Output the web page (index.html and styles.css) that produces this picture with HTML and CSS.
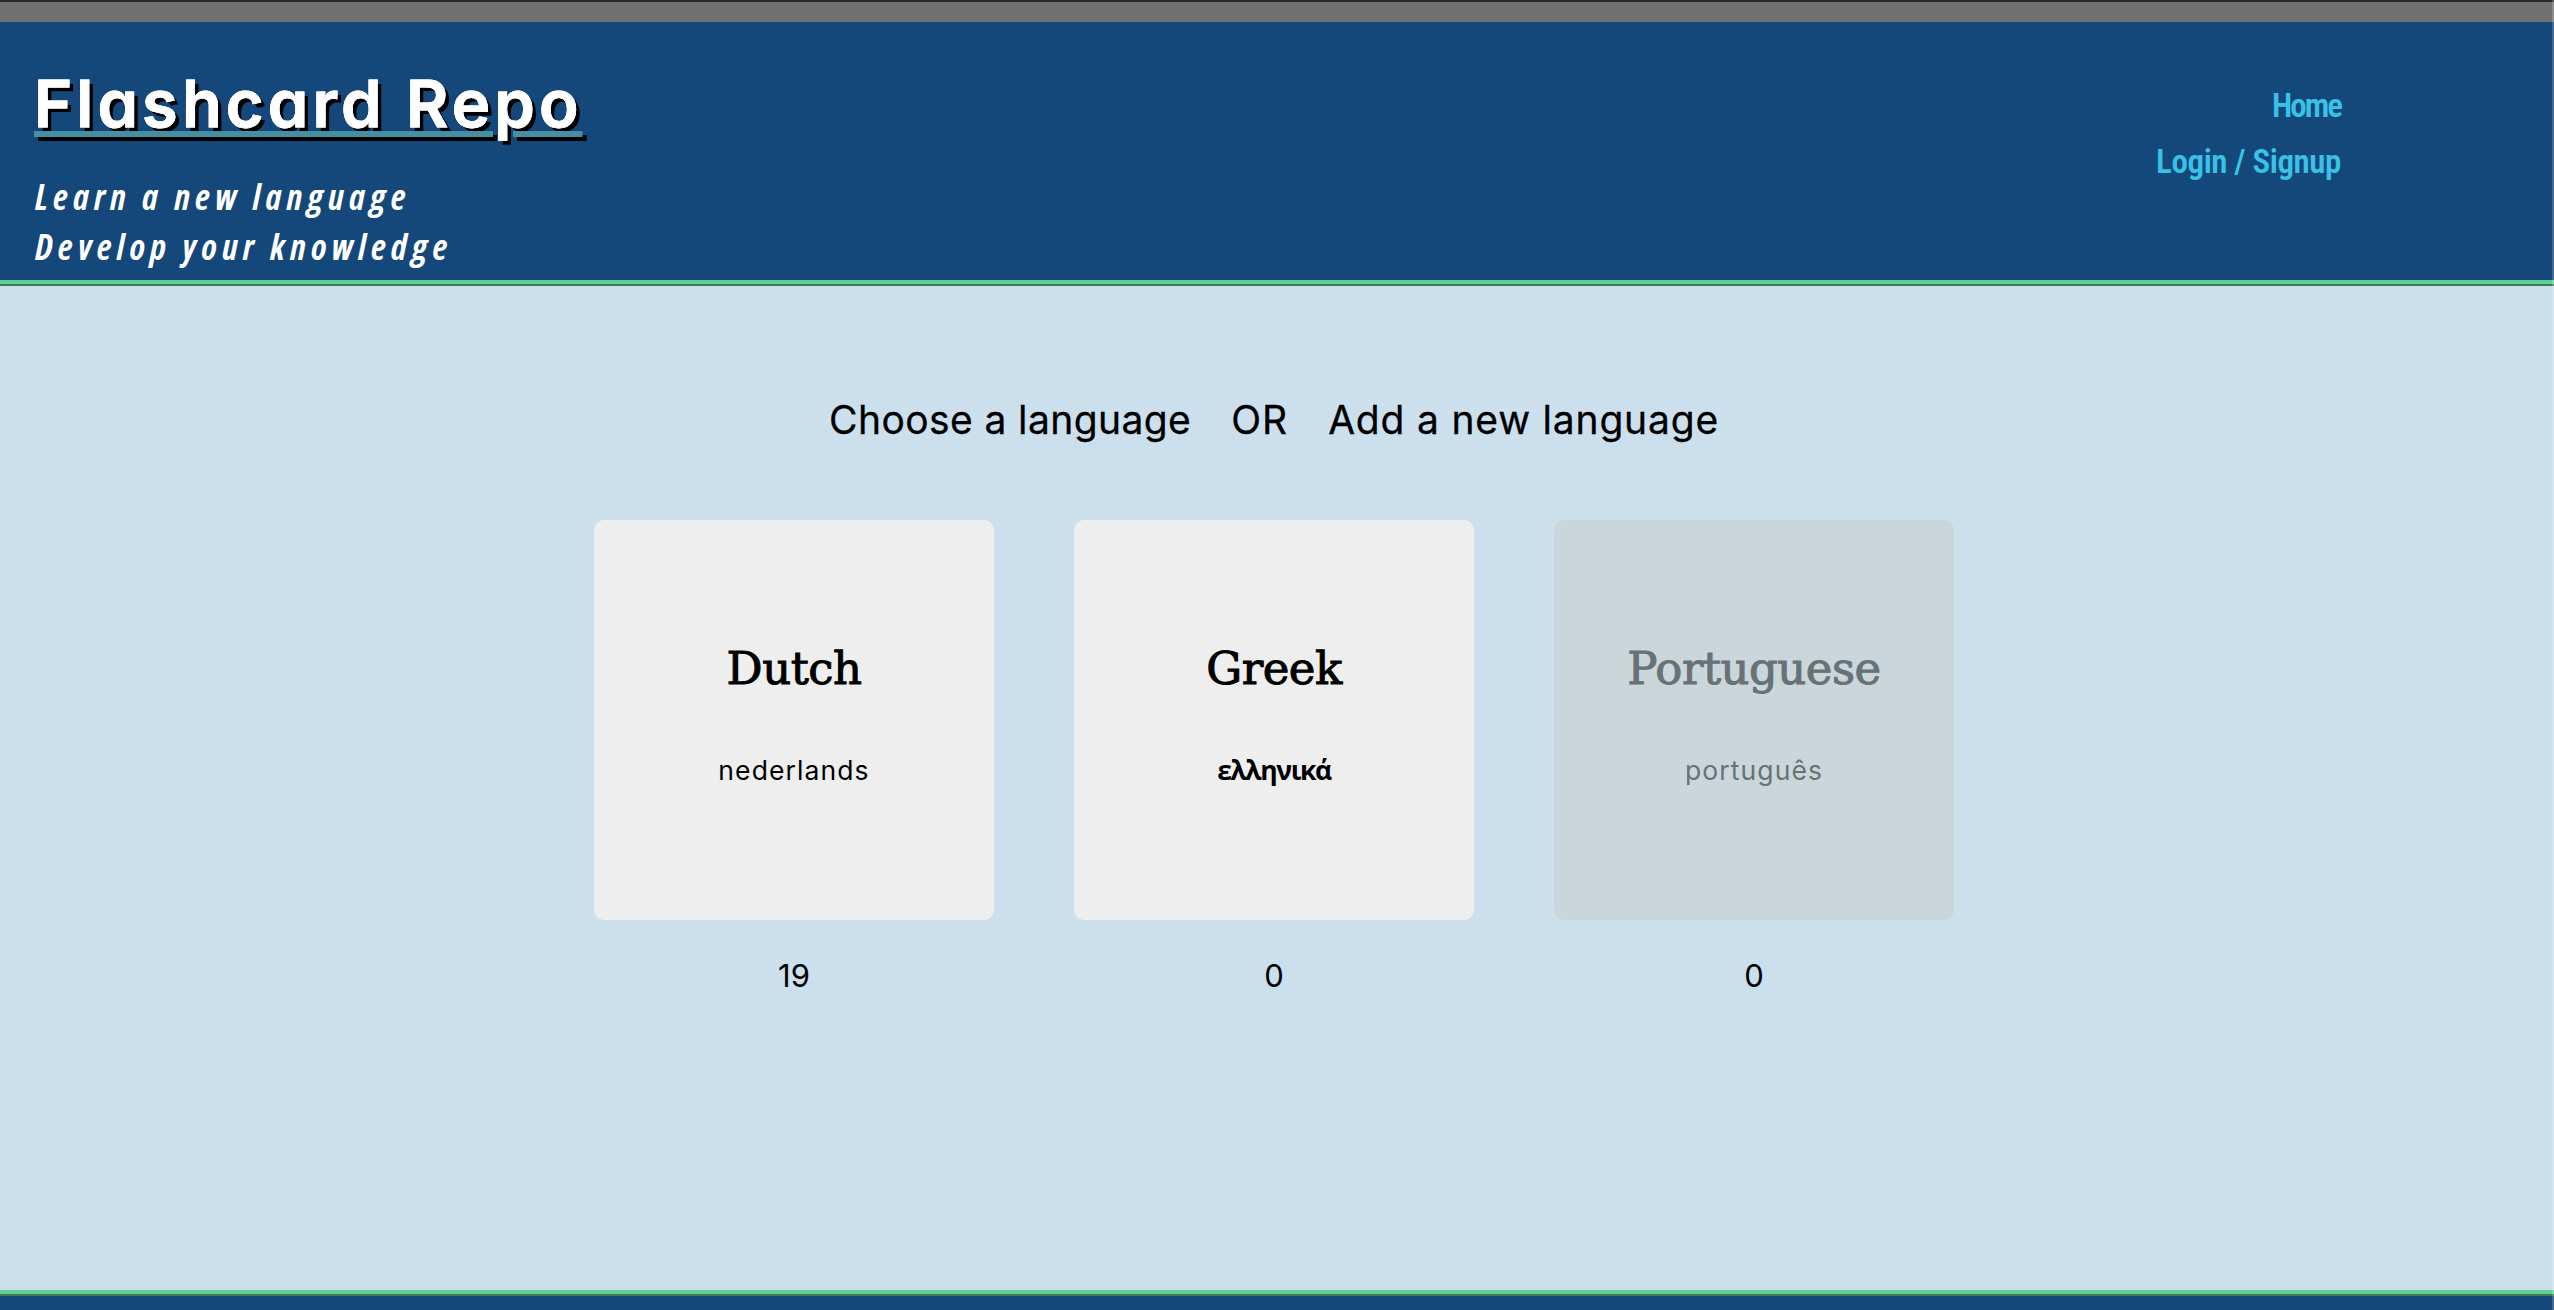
FILE: index.html
```
<!DOCTYPE html>
<html lang="en">
<head>
<meta charset="utf-8">
<title>Flashcard Repo</title>
<link rel="stylesheet" href="styles.css">
</head>
<body>
<div class="top-strip"></div>
<header class="site-header">
  <div class="brand">
    <h1 class="brand-title"><span>Flashcard Repo</span></h1>
    <p class="tagline">Learn a new language</p>
    <p class="tagline">Develop your knowledge</p>
  </div>
  <nav class="nav">
    <a class="nav-link home">Home</a>
    <a class="nav-link">Login / Signup</a>
  </nav>
</header>
<main class="main">
  <div class="prompt">
    <span class="choose">Choose a language</span>
    <span class="or">OR</span>
    <span class="add">Add a new language</span>
  </div>
  <div class="cards">
    <section class="deck">
      <div class="card"><h2 class="name">Dutch</h2><p class="native">nederlands</p></div>
      <p class="count">19</p>
    </section>
    <section class="deck">
      <div class="card"><h2 class="name">Greek</h2><p class="native el">ελληνικά</p></div>
      <p class="count">0</p>
    </section>
    <section class="deck">
      <div class="card disabled"><h2 class="name">Portuguese</h2><p class="native">português</p></div>
      <p class="count">0</p>
    </section>
  </div>
</main>
<footer class="site-footer"></footer>
<div class="edge"></div>
</body>
</html>
```
FILE: styles.css
```
* { box-sizing: border-box; margin: 0; padding: 0; }
body {
  height: 1310px;
  overflow: hidden;
  display: flex;
  flex-direction: column;
  background: #ccdfec;
  color: #000;
  font-family: Inter, "Noto Sans", sans-serif;
}
.top-strip { height: 22px; background: #717171; border-top: 2px solid #282828; }
.site-header {
  height: 264px;
  display: flex;
  justify-content: space-between;
  padding: 42px 213px 0 34px;
  background: #14477a;
  border-bottom: 2px solid #3f7b5b;
  box-shadow: inset 0 -4px #5fd093;
}
.brand-title {
  margin-bottom: 28px;
  color: #fff;
  font-size: 65px;
  font-weight: 600;
  line-height: 80px;
  letter-spacing: 4.1px;
  font-feature-settings: "cv11";
  text-shadow: 4px 4px #000;
  -webkit-text-stroke: 0.8px #fff;
}
.brand-title span {
  text-decoration: underline 6px #468fa3;
  text-underline-offset: 4px;
}
.tagline {
  padding-left: 1px;
  color: #fff;
  font: italic 700 35px/50px "Open Sans", sans-serif;
  font-stretch: 78%;
  letter-spacing: 5.1px;
}
.nav { display: flex; flex-direction: column; align-items: flex-end; padding-top: 14px; }
.nav-link {
  color: #37c2e8;
  font: 600 33px/55.6px Roboto, sans-serif;
  font-stretch: 75%;
  letter-spacing: -0.4px;
}
.home { letter-spacing: -2px; }
.main { flex: 1; padding-top: 110px; }
.prompt {
  display: flex;
  justify-content: center;
  gap: 40px;
  margin-bottom: 76px;
  padding-right: 6px;
  font-size: 39px;
  line-height: 48px;
  -webkit-text-stroke: 0.3px currentColor;
}
.choose { letter-spacing: 0.4px; }
.or { letter-spacing: 1px; }
.add { letter-spacing: 0.8px; }
.cards { display: flex; justify-content: center; gap: 80px; padding-right: 6px; }
.deck { width: 400px; text-align: center; }
.card { height: 400px; padding-top: 119px; border-radius: 10px; background: #eee; }
.name {
  margin-bottom: 51px;
  font: 400 45px/60px "DejaVu Serif", serif;
  letter-spacing: -0.5px;
  -webkit-text-stroke: 1px currentColor;
}
.native { font-size: 26.5px; line-height: 40px; letter-spacing: 1.1px; }
.el { font-family: "Open Sans", sans-serif; font-weight: 700; letter-spacing: -1.4px; }
.disabled { background: #cbd6db; color: #667278; }
.count { margin-top: 36px; font-size: 31px; line-height: 40px; }
.site-footer {
  height: 20px;
  background: #14477a;
  border-top: 4px solid #5fd093;
  box-shadow: inset 0 2px #3f7b5b;
}
.edge { position: absolute; top: 0; right: 0; width: 2px; height: 1310px; background: rgba(255, 255, 255, 0.2); }
```
